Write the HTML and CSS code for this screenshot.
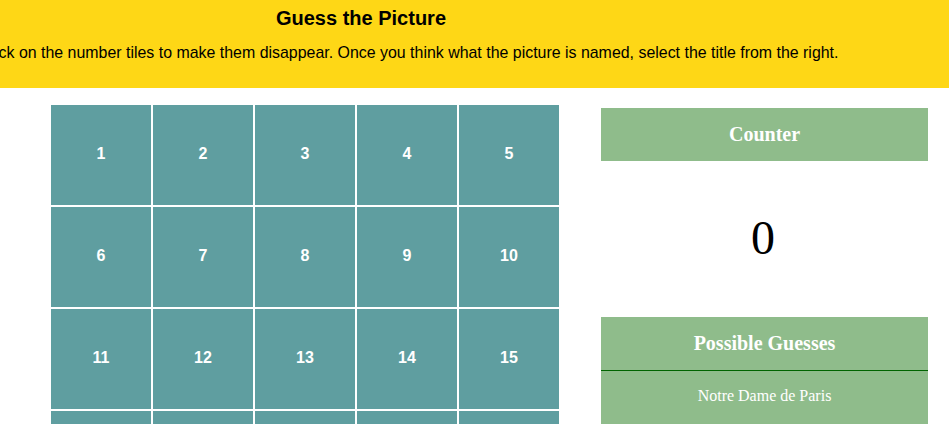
FILE: index.html
```html
<!DOCTYPE html>
<html>
<head>
<meta charset="utf-8">
<link rel="stylesheet" href="styles.css">
</head>
<body>
<header class="top">
  <div class="title">Guess the Picture</div>
  <div class="intro">Click on the number tiles to make them disappear. Once you think what the picture is named, select the title from the right.</div>
</header>
<main class="main">
  <div class="board">
    <div class="tile">1</div><div class="tile">2</div><div class="tile">3</div><div class="tile">4</div><div class="tile">5</div>
    <div class="tile">6</div><div class="tile">7</div><div class="tile">8</div><div class="tile">9</div><div class="tile">10</div>
    <div class="tile">11</div><div class="tile">12</div><div class="tile">13</div><div class="tile">14</div><div class="tile">15</div>
    <div class="tile">16</div><div class="tile">17</div><div class="tile">18</div><div class="tile">19</div><div class="tile">20</div>
  </div>
  <aside class="side">
    <div class="panel-head">Counter</div>
    <div class="count">0</div>
    <div class="panel-head guesses-head">Possible Guesses</div>
    <div class="guess">Notre Dame de Paris</div>
  </aside>
</main>
</body>
</html>
```
FILE: styles.css
```css
html, body {
  margin: 0;
  padding: 0;
  background: #ffffff;
  overflow: hidden;
}
body {
  width: 949px;
  height: 424px;
}
.top {
  background: #fed716;
  height: 88px;
  font-family: "Liberation Sans", Arial, sans-serif;
  color: #000;
  overflow: hidden;
}
.title {
  width: 722px;
  text-align: center;
  font-weight: bold;
  font-size: 20px;
  line-height: 24px;
  padding-top: 6px;
}
.intro {
  white-space: nowrap;
  font-size: 15.93px;
  line-height: 18px;
  margin-top: 14px;
  margin-left: -20px;
}
.main {
  display: flex;
  align-items: flex-start;
}
.board {
  display: grid;
  grid-template-columns: repeat(5, 100px);
  grid-auto-rows: 100px;
  gap: 2px;
  margin-left: 51px;
  margin-top: 17px;
}
.tile {
  background: #5f9ea0;
  color: #ffffff;
  font-family: "Liberation Sans", Arial, sans-serif;
  font-weight: bold;
  font-size: 16px;
  padding-bottom: 3px;
  box-sizing: border-box;
  display: flex;
  align-items: center;
  justify-content: center;
}
.side {
  width: 327px;
  margin-left: 42px;
  margin-top: 20px;
  font-family: "Liberation Serif", "Times New Roman", serif;
}
.panel-head {
  background: #8fbc8b;
  color: #ffffff;
  font-weight: bold;
  font-size: 20px;
  height: 53px;
  display: flex;
  align-items: center;
  justify-content: center;
}
.count {
  height: 156px;
  padding-bottom: 4px;
  padding-right: 3px;
  box-sizing: border-box;
  display: flex;
  align-items: center;
  justify-content: center;
  font-size: 48px;
  color: #000;
}
.guesses-head {
  border-bottom: 1px solid #006400;
}
.guess {
  background: #8fbc8b;
  color: #ffffff;
  font-size: 16px;
  height: 54px;
  padding-bottom: 4px;
  box-sizing: border-box;
  display: flex;
  align-items: center;
  justify-content: center;
}
```
